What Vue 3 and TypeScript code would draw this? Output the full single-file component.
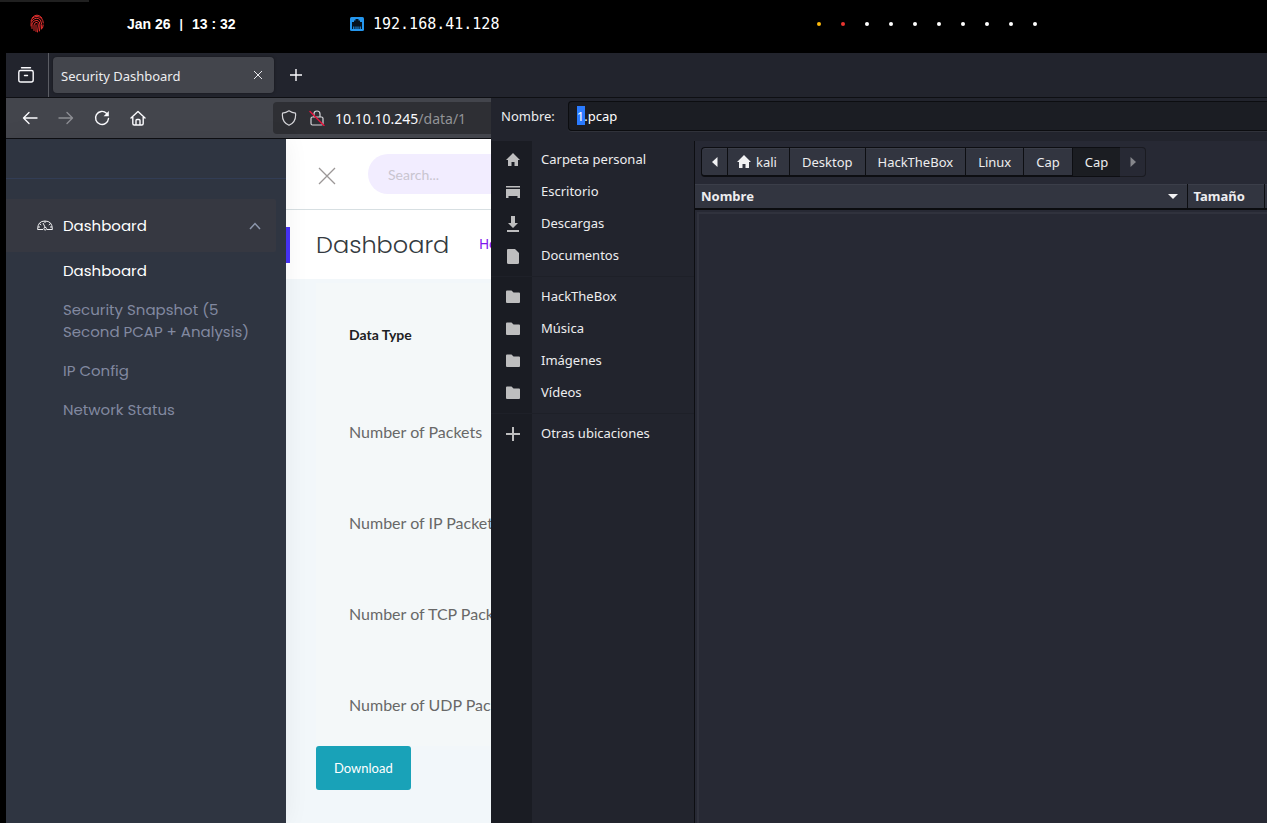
<script setup lang="ts">
import { ref } from 'vue'

const fileName = ref('1.pcap')
const search = ref('')

const workspaces: string[] = ['active', 'urgent', '', '', '', '', '', '', '', '']
const metrics: string[] = ['Number of Packets', 'Number of IP Packets', 'Number of TCP Packets', 'Number of UDP Packets']
const menu: { label: string; current?: boolean }[] = [
  { label: 'Dashboard', current: true },
  { label: 'Security Snapshot (5 Second PCAP + Analysis)' },
  { label: 'IP Config' },
  { label: 'Network Status' },
]

const icons: Record<string, string> = {
  home: 'M8 1 L15 8 L13 8 L13 14 L9.5 14 L9.5 10 L6.5 10 L6.5 14 L3 14 L3 8 L1 8 Z',
  desktop: 'M1 2 H15 V3.5 H1 Z M1 5 H15 V14 H12.5 V12 H3.5 V14 H1 Z',
  download: 'M6 0 H10 V7 H13 L8 12 L3 7 H6 Z M2 14 H14 V16 H2 Z',
  document: 'M3 1 H10 L14 5 V14.5 Q14 16 12.5 16 H3.5 Q2 16 2 14.5 V2 Q2 1 3 1 Z',
  folder: 'M2 1.5 H6.5 L8.5 3.5 H14 Q15 3.5 15 4.5 V13 Q15 14 14 14 H2 Q1 14 1 13 V2.5 Q1 1.5 2 1.5 Z',
  plus: 'M7 1 H9 V7 H15 V9 H9 V15 H7 V9 H1 V7 H7 Z',
}
const places: { label: string; icon: string }[][] = [
  [
    { label: 'Carpeta personal', icon: 'home' },
    { label: 'Escritorio', icon: 'desktop' },
    { label: 'Descargas', icon: 'download' },
    { label: 'Documentos', icon: 'document' },
  ],
  [
    { label: 'HackTheBox', icon: 'folder' },
    { label: 'Música', icon: 'folder' },
    { label: 'Imágenes', icon: 'folder' },
    { label: 'Vídeos', icon: 'folder' },
  ],
  [{ label: 'Otras ubicaciones', icon: 'plus' }],
]
const path: string[] = ['kali', 'Desktop', 'HackTheBox', 'Linux', 'Cap', 'Cap']
</script>

<template>
  <div class="screen">
    <header class="topbar">
      <svg class="finger" viewBox="0 0 14 19" fill="none" stroke="#e5302f" stroke-width="1" stroke-linecap="round">
        <path d="M2 4 Q7 -2 12 4 M1 7 Q2 2.500 7 2.500 Q13 3 13.300 9 M1 12 Q.5 8 2.500 6 Q7 2.500 10.500 6 Q12.500 10 11.500 15 M2 14.500 V10 Q3 6.300 7 6.300 Q10 7 10 11 L9.500 17 M4 16.500 V11 Q4.500 8.300 7 8.300 Q8.500 9 8.300 12 L7.500 18 M6 17.500 V11 M13.200 11 L12.500 14" />
      </svg>
      <time class="clock"><span>Jan 26</span><span class="bar">|</span><span>13 : 32</span></time>
      <div class="ip">
        <svg width="14" height="14" viewBox="0 0 14 14">
          <rect width="14" height="14" rx="1.500" fill="#2496ed" />
          <path d="M2 12 V5 H4 V3.500 H5.500 V2 H8.500 V3.500 H10 V5 H12 V12 H10.800 V9.500 H9.700 V12 H8.500 V9.500 H7.500 V12 H6.500 V9.500 H5.500 V12 H4.300 V9.500 H3.200 V12 Z" fill="#06131e" />
        </svg>
        <span>192.168.41.128</span>
      </div>
      <div class="dots"><i v-for="(state, n) in workspaces" :key="n" :class="state"></i></div>
    </header>

    <section class="browser">
      <div class="tabs">
        <button class="overview" aria-label="Tab overview">
          <svg width="16" height="16" viewBox="0 0 16 16" fill="none" stroke="#fbfbfe" stroke-width="1.400" stroke-linecap="round">
            <path d="M3.500 .8 H12.500 M2.500 3.500 H13.500 Q15.200 3.500 15.200 5.200 V13 Q15.200 15 13.200 15 H2.800 Q.8 15 .8 13 V5.200 Q.8 3.500 2.500 3.500 Z M6.500 8.500 H9.500" />
          </svg>
        </button>
        <div class="tab">
          <span>Security Dashboard</span>
          <button aria-label="Close tab">
            <svg width="10" height="10" viewBox="0 0 10 10" stroke="#e8e8ec" fill="none"><path d="M1 1 L9 9 M9 1 L1 9" /></svg>
          </button>
        </div>
        <button class="newtab" aria-label="New tab">
          <svg width="14" height="14" viewBox="0 0 14 14" stroke="#fbfbfe" stroke-width="1.400"><path d="M7 1 V13 M1 7 H13" /></svg>
        </button>
      </div>

      <nav class="toolbar">
        <button aria-label="Back">
          <svg viewBox="0 0 16 16"><path d="M15 8 H1.500 M7 2.500 L1.500 8 L7 13.500" /></svg>
        </button>
        <button aria-label="Forward" disabled>
          <svg viewBox="0 0 16 16"><path d="M1 8 H14.500 M9 2.500 L14.500 8 L9 13.500" /></svg>
        </button>
        <button aria-label="Reload">
          <svg viewBox="0 0 16 16"><path d="M12.500 3.200 A6.500 6.500 0 1 0 14.500 8.500" /><path d="M14.800 1 V6.200 H9.600 Z" fill="#fbfbfe" stroke="none" /></svg>
        </button>
        <button aria-label="Home">
          <svg viewBox="0 0 16 16"><path d="M1 8 L8 1.500 L15 8 M2.800 7 V13.500 Q2.800 15 4.200 15 H11.800 Q13.200 15 13.200 13.500 V7 M6 15 V10.500 Q6 9.500 7 9.500 H9 Q10 9.500 10 10.500 V15" /></svg>
        </button>
        <div class="url">
          <svg viewBox="0 0 16 16"><path d="M8 .8 Q11 2.800 14.500 3.200 Q15.500 12 8 15.300 Q.5 12 1.500 3.200 Q5 2.800 8 .8 Z" /></svg>
          <svg viewBox="0 0 16 16"><path d="M5 7 V4 Q5 1 8 1 Q11 1 11 4 V7 M3.500 7 H12.500 Q14 7 14 8.500 V13.500 Q14 15 12.500 15 H3.500 Q2 15 2 13.500 V8.500 Q2 7 3.500 7 Z" /><path d="M1 1.500 L15 15.500" class="slash" /></svg>
          <span class="address">10.10.10.245<em>/data/1</em></span>
        </div>
      </nav>

      <div class="page">
        <aside class="sidebar">
          <div class="logo"></div>
          <button class="group" aria-expanded="true">
            <svg width="16" height="11" viewBox="0 0 16 11" fill="none" stroke="#f0f0f2"><path d="M6 9.500 H.6 Q.6 1 8 1 Q15.400 1 15.400 9.500 H10 M8 1 V3 M2.500 3.500 L4.200 5 M13.500 3.500 L11.800 5 M1 7 H3 M13 7 H15 M6 3 L8.500 8" /><circle cx="8.200" cy="8.700" r="1.300" /></svg>
            <span>Dashboard</span>
            <svg width="12" height="8" viewBox="0 0 12 8" fill="none" stroke="#8d97ad" stroke-width="1.500"><path d="M1 7 L6 1.500 L11 7" /></svg>
          </button>
          <ul>
            <li v-for="item in menu" :key="item.label"><a href="#" :class="{ current: item.current }">{{ item.label }}</a></li>
          </ul>
        </aside>

        <main class="content">
          <div class="search">
            <button aria-label="Close menu">
              <svg width="18" height="18" viewBox="0 0 18 18" fill="none" stroke="#9b9797" stroke-width="1.300"><path d="M1 1 L17 17 M17 1 L1 17" /></svg>
            </button>
            <input v-model="search" type="search" placeholder="Search..." aria-label="Search" />
          </div>
          <div class="heading">
            <i class="accent"></i>
            <h1>Dashboard</h1>
            <a href="#">Home</a>
          </div>
          <div class="data">
            <table>
              <thead><tr><th>Data Type</th></tr></thead>
              <tbody><tr v-for="metric in metrics" :key="metric"><td>{{ metric }}</td></tr></tbody>
            </table>
            <button class="download">Download</button>
          </div>
        </main>
      </div>
    </section>

    <section class="dialog" role="dialog" aria-label="Guardar">
      <div class="namerow">
        <label for="file-name">Nombre:</label>
        <div class="entry">
          <span class="picked" aria-hidden="true"></span>
          <input id="file-name" v-model="fileName" type="text" />
        </div>
      </div>
      <div class="chooser">
        <nav class="places">
          <div v-for="(group, g) in places" :key="g" class="placegroup">
            <a v-for="place in group" :key="place.label" href="#">
              <svg width="16" height="16" viewBox="0 0 16 16"><path :d="icons[place.icon]" /></svg>
              <span>{{ place.label }}</span>
            </a>
          </div>
        </nav>
        <div class="files">
          <div class="crumbs">
            <button class="arrow" aria-label="Anterior"><svg width="6" height="10" viewBox="0 0 6 10"><path d="M5.500 0 V10 L0 5 Z" /></svg></button>
            <button v-for="(part, n) in path" :key="n" :class="{ chosen: n === path.length - 1 }">
              <svg v-if="n === 0" width="16" height="16" viewBox="0 0 16 16"><path :d="icons.home" /></svg>{{ part }}
            </button>
            <button class="arrow off" aria-label="Siguiente" disabled><svg width="6" height="10" viewBox="0 0 6 10"><path d="M.5 0 V10 L6 5 Z" /></svg></button>
          </div>
          <table class="columns">
            <thead>
              <tr>
                <th><div>Nombre <svg width="10" height="5" viewBox="0 0 10 5"><path d="M0 0 H10 L5 5 Z" /></svg></div></th>
                <th class="size">Tamaño</th>
                <th class="rest"></th>
              </tr>
            </thead>
          </table>
          <div class="list"></div>
        </div>
      </div>
    </section>
  </div>
</template>

<style>
body {
  margin: 0;
  background: #000;
}
</style>

<style scoped>
* {
  box-sizing: border-box;
}
.screen {
  position: relative;
  display: flex;
  flex-direction: column;
  min-height: 100vh;
  overflow: hidden;
  background: #000;
  font-family: "Noto Sans", sans-serif;
  font-size: 13px;
  color: #ededef;
}
button {
  padding: 0;
  border: 0;
  background: none;
  color: inherit;
  font: inherit;
}
a {
  color: inherit;
  text-decoration: none;
}
svg {
  display: block;
  flex: none;
}
.topbar {
  display: grid;
  grid-template-columns: 97px 223px 467px 1fr;
  align-items: center;
  height: 53px;
  padding: 0 0 6px 30px;
  background: linear-gradient(#202020, #202020) 0 0 / 89px 2px no-repeat;
}
.finger {
  width: 14px;
  height: 19px;
}
.clock {
  display: flex;
  gap: 9px;
  align-items: center;
  font: bold 14px "Liberation Sans", sans-serif;
  color: #fff;
}
.bar {
  font-size: 12px;
}
.ip {
  display: flex;
  gap: 9px;
  align-items: center;
  font: 15px "DejaVu Sans Mono", monospace;
  color: #fff;
}
.dots {
  display: flex;
  gap: 20px;
}
.dots i {
  width: 4px;
  height: 4px;
  border-radius: 2px;
  background: #fff;
}
.dots .active {
  background: #fdb90b;
}
.dots .urgent {
  background: #ea3530;
}
.browser {
  display: flex;
  flex: 1;
  flex-direction: column;
  margin-left: 6px;
}
.tabs {
  display: flex;
  align-items: center;
  height: 45px;
  background: #22242d;
  border-bottom: 1px solid #0e0f13;
}
.overview {
  display: grid;
  place-items: center;
  width: 43px;
  height: 44px;
  padding-right: 2px;
  border-right: 1px solid #5b5d64;
}
.tab {
  display: flex;
  align-items: center;
  justify-content: space-between;
  width: 221px;
  height: 36px;
  margin-left: 4px;
  padding: 0 11px 0 8px;
  border-radius: 4px;
  background: #43454c;
  box-shadow: 0 0 3px #0006;
}
.tab span {
  padding-top: 2px;
}
.newtab {
  margin-left: 15px;
}
.toolbar {
  display: flex;
  gap: 20px;
  align-items: center;
  height: 41px;
  padding-left: 16px;
  background: #43454c;
  border-bottom: 1px solid #0e0f13;
}
.toolbar svg {
  width: 16px;
  height: 16px;
  fill: none;
  stroke: #fbfbfe;
  stroke-width: 1.4;
  stroke-linecap: round;
  stroke-linejoin: round;
}
.toolbar button:disabled {
  opacity: 0.4;
}
.url {
  display: flex;
  flex: 1;
  gap: 12px;
  align-items: center;
  height: 32px;
  margin-left: 107px;
  padding-left: 8px;
  border-radius: 4px 0 0 4px;
  background: #2e2f34;
  font-size: 14px;
}
.toolbar .url svg {
  stroke: #d6d6da;
  stroke-width: 1.2;
}
.toolbar .url .slash {
  stroke: #e3123c;
  stroke-width: 1.5;
}
.address {
  margin-left: -2px;
  color: #fbfbfe;
}
.address em {
  font-style: normal;
  color: #929397;
}
.page {
  display: grid;
  flex: 1;
  grid-template-columns: 280px 1fr;
}
.sidebar {
  position: relative;
  background: #2f3541;
  box-shadow: 0 0 24px rgba(0, 0, 0, 0.06);
  font-family: Poppins, Inter, sans-serif;
  font-size: 15px;
}
.logo {
  height: 40px;
  margin-bottom: 20px;
  border-bottom: 1px solid #323d55;
}
.group {
  display: flex;
  align-items: center;
  width: 270px;
  height: 53px;
  padding: 0 15px 0 31px;
  border-radius: 0 2px 2px 0;
  background: #363841;
  color: #fff;
}
.group span {
  flex: 1;
  margin-left: 10px;
  text-align: left;
}
.sidebar ul {
  display: grid;
  gap: 1px;
  margin: 0;
  padding: 0 32px 0 57px;
  list-style: none;
}
.sidebar li {
  padding: 8px 0;
  line-height: 22px;
  color: #8289a0;
}
.current {
  color: #fff;
}
.content {
  display: flex;
  flex-direction: column;
  background: #f2f7fa;
  font-family: Lato, sans-serif;
}
.search {
  display: flex;
  gap: 32px;
  align-items: center;
  height: 71px;
  padding: 0 0 0 32px;
  border-bottom: 1px solid #d7dfe2;
  background: #fff;
}
.search button {
  margin-top: 4px;
}
.search input {
  width: 300px;
  height: 40px;
  padding: 0 20px;
  border: 0;
  border-radius: 20px;
  background: #f2edff;
  font: 14px Lato, sans-serif;
}
.search input::placeholder {
  color: #c9c5d0;
}
.heading {
  display: flex;
  align-items: center;
  height: 69px;
  background: #fff;
  font-family: Poppins, Inter, sans-serif;
}
.accent {
  width: 4px;
  height: 36px;
  margin-right: 26px;
  background: #4733f7;
}
h1 {
  margin: 0 30px 0 0;
  font-size: 24px;
  font-weight: 300;
  color: #343a40;
}
.heading a {
  font-size: 14px;
  color: #7f14ee;
}
.data {
  flex: 1;
  padding: 4px 30px 0;
}
.data table {
  width: 100%;
  border-collapse: collapse;
  background: #f4f8f9;
  text-align: left;
}
.data th {
  height: 104px;
  padding: 0 33px 2px;
  font-size: 14px;
  color: #1d2124;
}
.data td {
  padding: 33px 33px 34px;
  font-size: 16px;
  line-height: 24px;
  color: #686868;
}
.data tr:last-child td {
  padding-bottom: 29px;
}
.download {
  height: 44px;
  padding: 0 18px;
  border-radius: 3px;
  background: #19a2b8;
  font-size: 13px;
  color: #fff;
}
.dialog {
  position: absolute;
  top: 98px;
  right: 0;
  bottom: 0;
  left: 491px;
  display: flex;
  flex-direction: column;
  background: #22242d;
}
.namerow {
  display: flex;
  gap: 13px;
  align-items: center;
  height: 43px;
  padding: 3px 0 10px 10px;
}
.entry {
  position: relative;
  flex: 1;
  border-radius: 4px 0 0 4px;
  background: #1b1d23;
  box-shadow: 0 1px 0 #30323a;
}
.entry input {
  position: relative;
  display: block;
  width: 100%;
  height: 30px;
  padding: 0 8px;
  border: 1px solid #0c0d10;
  border-right: 0;
  border-radius: 4px 0 0 4px;
  background: none;
  font: 13px "Noto Sans", sans-serif;
  color: #fff;
}
.picked {
  position: absolute;
  top: 5px;
  left: 9px;
  width: 8px;
  height: 19px;
  background: #2a7bff;
}
.chooser {
  display: grid;
  flex: 1;
  grid-template-columns: 204px 1fr;
}
.places {
  padding-top: 3px;
  border-right: 1px solid #0d0e12;
  background: linear-gradient(90deg, #1a1c23 41px, #22242d 41px);
}
.placegroup + .placegroup {
  margin-top: 4px;
  padding-top: 4px;
  border-top: 1px solid #1e2028;
}
.places a {
  display: flex;
  gap: 20px;
  align-items: center;
  height: 32px;
  padding-left: 14px;
}
.places span {
  padding-bottom: 2px;
}
.places svg {
  fill: #bebebf;
}
.files {
  display: flex;
  flex-direction: column;
  background: #272934;
}
.crumbs {
  display: flex;
  height: 30px;
  margin: 6px 6px 7px;
}
.crumbs button {
  display: flex;
  gap: 4px;
  align-items: center;
  padding: 0 12px;
  border: solid #0d0e12;
  border-width: 1px 0 2px 1px;
  background: #323540;
  box-shadow: inset 0 1px 0 #3b3e49;
}
.crumbs button svg {
  fill: #f2f2f3;
}
.crumbs button:nth-child(2) {
  padding-left: 8px;
}
.crumbs .arrow {
  justify-content: center;
  width: 26px;
  padding: 0;
  border-radius: 4px 0 0 4px;
}
.crumbs .chosen {
  border-bottom-width: 1px;
  background: #1b1d22;
  box-shadow: none;
}
.crumbs .off {
  border-width: 1px 1px 1px 0;
  border-color: #1a1b21;
  border-radius: 0 4px 4px 0;
  background: #272934;
  box-shadow: none;
}
.crumbs .off svg {
  fill: #85868b;
}
.columns {
  width: 100%;
  border-collapse: collapse;
  table-layout: fixed;
  background: #323540;
  box-shadow: inset 0 1px 0 #3b3e49;
  text-align: left;
}
.columns th {
  height: 25px;
  padding: 0 6px;
  border-bottom: 2px solid #0b0c0f;
  line-height: 18px;
}
.columns th div {
  display: flex;
  align-items: center;
  justify-content: space-between;
  padding-right: 3px;
}
.columns svg {
  fill: #f2f2f3;
}
.columns .size {
  width: 77px;
  border-left: 1px solid #0d0e12;
}
.columns .rest {
  width: 3px;
  padding: 0;
  border-left: 1px solid #0d0e12;
}
.list {
  flex: 1;
  margin: 2px 0 0 2px;
  border: solid #30323d;
  border-width: 2px 0 0 2px;
}
</style>
